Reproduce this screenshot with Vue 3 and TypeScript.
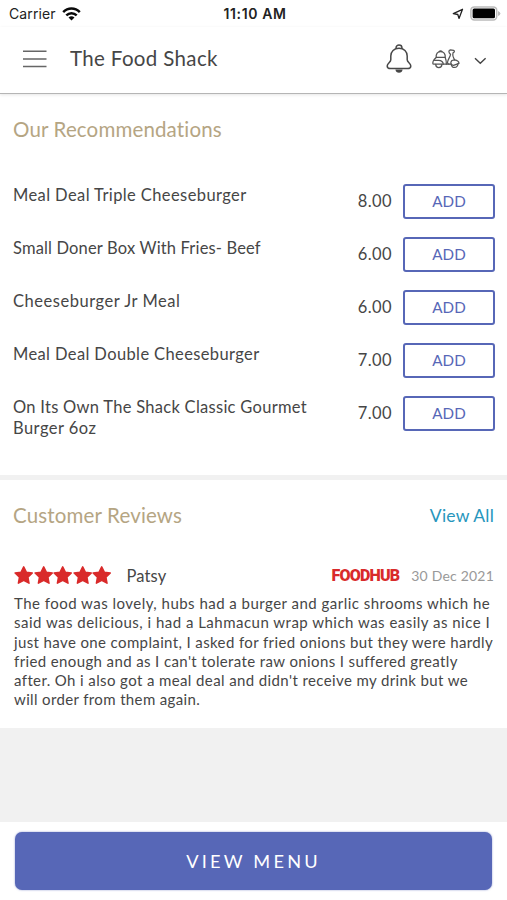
<script setup lang="ts">
interface TextLine {
  text: string
  tracking: number
}

interface MenuItem {
  name: TextLine[]
  price: string
}

const items: MenuItem[] = [
  { name: [{ text: 'Meal Deal Triple Cheeseburger', tracking: 0.4 }], price: '8.00' },
  { name: [{ text: 'Small Doner Box With Fries- Beef', tracking: 0.16 }], price: '6.00' },
  { name: [{ text: 'Cheeseburger Jr Meal', tracking: 0.53 }], price: '6.00' },
  { name: [{ text: 'Meal Deal Double Cheeseburger', tracking: 0.38 }], price: '7.00' },
  {
    name: [
      { text: 'On Its Own The Shack Classic Gourmet', tracking: 0.28 },
      { text: 'Burger 6oz', tracking: 0.46 },
    ],
    price: '7.00',
  },
]

const reviewLines: TextLine[] = [
  { text: 'The food was lovely, hubs had a burger and garlic shrooms which he', tracking: 0.476 },
  { text: 'said was delicious, i had a Lahmacun wrap which was easily as nice I', tracking: 0.485 },
  { text: 'just have one complaint, I asked for fried onions but they were hardly', tracking: 0.38 },
  { text: "fried enough and as I can't tolerate raw onions I suffered greatly", tracking: 0.38 },
  { text: "after. Oh i also got a meal deal and didn't receive my drink but we", tracking: 0.39 },
  { text: 'will order from them again.', tracking: 0.36 },
]
</script>

<template>
  <div class="screen">
    <div class="status">
      <div class="carrier">
        <span>Carrier</span>
        <svg width="19" height="14" viewBox="0 0 19 14">
          <g fill="none" stroke="#0a0a0a" stroke-width="2.5">
            <path d="M1.2 5.2C5.9.4 13.1.4 17.8 5.2" />
            <path d="M4.3 8.3c3-2.9 7.4-2.9 10.4 0" />
          </g>
          <path d="M6.5 10.5q3-2.5 6 0l-3 3.1z" fill="#0a0a0a" />
        </svg>
      </div>
      <span class="clock">11:10 AM</span>
      <div class="indicators">
        <svg width="12" height="12" viewBox="0 0 12 12">
          <path d="M10.5 1.3 7 10.4 5.8 6.5 1.3 5.6z" fill="none" stroke="#222" stroke-width="1.3" stroke-linejoin="round" />
        </svg>
        <svg width="31" height="15" viewBox="0 0 31 15">
          <rect x=".9" y=".9" width="25.8" height="13" rx="3.4" fill="#fff" stroke="#bbb" stroke-width="1.5" />
          <rect x="2.6" y="2.5" width="22.4" height="9.8" rx="1.5" fill="#000" />
          <path d="M28 5v5q2.4-1 2.4-2.5T28 5z" fill="#bbb" />
        </svg>
      </div>
    </div>

    <header class="bar">
      <svg class="burger" width="24" height="18" viewBox="0 0 24 18">
        <path d="M0 1.3h23.5M0 9h23.5M0 16.5h23.5" stroke="#666" stroke-width="1.4" />
      </svg>
      <h1>The Food Shack</h1>
      <svg class="bell" width="26" height="30" viewBox="0 0 26 30">
        <g fill="none" stroke="#484848" stroke-width="1.5" stroke-linejoin="round">
          <path d="M10.1 4.3V3.6a2.9 2.7 0 0 1 5.8 0v.7" />
          <path d="M13 4.2c-5 0-8.2 3.3-8.2 7.800v3.700c0 2.500-3.600 3.500-3.600 6.200 0 1.900 1.500 2.600 3.400 2.600h16.800c1.900 0 3.400-.7 3.400-2.600 0-2.700-3.600-3.700-3.600-6.200V12c0-4.500-3.200-7.800-8.200-7.800z" />
        </g>
        <path d="M9.4 25.6h7.2c-.3 2.3-1.6 3.2-3.6 3.2s-3.300-.9-3.600-3.200z" fill="#484848" />
      </svg>
      <svg class="scooter" width="28" height="20" viewBox="0 0 28 20">
        <g fill="none" stroke="#555" stroke-width="1.25" stroke-linecap="round" stroke-linejoin="round">
          <path d="M4.200 8.400C3.800 4.800 5.600 2.500 8.600 2.500s5 2.300 4.600 5.900z" />
          <path d="M7.200 2.500q1.400-1.500 2.800 0M4.200 8.400C2.200 10 .8 12 .8 14.200q0 1 1 1h12.600c0-3-.4-5-1.200-6.800" />
          <path d="M2.600 11.400h4q4.400.2 4.700 3.800" />
          <path d="M3.700 15.400c.2 4.300 6 4.300 6.200 0M14.400 15.200h5.100" />
          <path d="M18.500 5.300c-2.200-1.400-2-4.300-.1-4.500l3.200.5c1.300.4.9 2.200-.4 2.200l-.4 1.900c-.3 2.400 1 3.700 1.800 5.400" />
          <path d="M18.500 5.300c0 2.400-2.900 5.300-3 8.100q0 1.600 1.500 1.800M22.600 10.800c2.800.5 4.300 1.700 4.400 3.500l-5.500 2c-2.600-.1-3.700-2.600-1.600-4.800z" />
          <path d="M19.200 15.300c.2 4.300 6.400 4.200 6.800-.6" />
        </g>
      </svg>
      <svg class="chevron" width="13" height="8" viewBox="0 0 13 8">
        <path d="m1 1.2 5.3 5.1 5.3-5.1" fill="none" stroke="#444" stroke-width="1.4" />
      </svg>
    </header>

    <section class="recommendations">
      <h2>Our Recommendations</h2>
      <ul>
        <li v-for="item in items" :key="item.name[0].text">
          <div class="name">
            <span v-for="line in item.name" :key="line.text" :style="{ letterSpacing: line.tracking + 'px' }">{{ line.text }}</span>
          </div>
          <span class="price">{{ item.price }}</span>
          <button class="add" type="button">ADD</button>
        </li>
      </ul>
    </section>

    <section class="reviews">
      <div class="reviews-head">
        <h2>Customer Reviews</h2>
        <a class="all">View All</a>
      </div>
      <div class="meta">
        <div class="stars">
          <svg v-for="n in 5" :key="n" width="19.5" height="19" viewBox="0 0 19.5 19">
            <path d="m9.7.9 2.6 5.3 6 .8-4.4 4.2 1.1 6-5.3-2.9-5.3 2.9 1.1-6L1.1 7l6-.8z" fill="#d92a2a" stroke="#d92a2a" stroke-width="1.5" stroke-linejoin="round" />
          </svg>
        </div>
        <span class="author">Patsy</span>
        <span class="brand">FOODHUB</span>
        <span class="date">30 Dec 2021</span>
      </div>
      <p class="body">
        <span v-for="line in reviewLines" :key="line.text" :style="{ letterSpacing: line.tracking + 'px' }">{{ line.text }}</span>
      </p>
    </section>

    <footer>
      <button class="view-menu" type="button">VIEW MENU</button>
    </footer>
  </div>
</template>

<style>
body {
  margin: 0;
}
</style>

<style scoped>
.screen {
  width: 507px;
  height: 900px;
  display: flex;
  flex-direction: column;
  overflow: hidden;
  background: #f1f1f1;
  color: #464646;
  font-family: Lato, 'Liberation Sans', sans-serif;
}
h1, h2, p, ul {
  margin: 0;
  padding: 0;
  font-weight: 400;
}
button {
  font-family: inherit;
  margin: 0;
  padding: 0;
}
.status {
  box-sizing: border-box;
  height: 27px;
  padding: 0 6px 0 9px;
  display: grid;
  grid-template-columns: 1fr auto 1fr;
  align-items: center;
  background: #fff;
  color: #222;
  font-family: Inter, sans-serif;
  font-size: 14px;
}
.carrier {
  display: flex;
  align-items: center;
  gap: 6px;
  letter-spacing: 0.1px;
}
.clock {
  font-weight: 600;
  font-size: 14px;
  letter-spacing: 0.6px;
}
.indicators {
  display: flex;
  justify-content: flex-end;
  align-items: center;
  gap: 6px;
}
.bar {
  box-sizing: border-box;
  height: 67px;
  padding: 0 20px 2px 23px;
  display: flex;
  align-items: center;
  background: #fff;
  border-bottom: 1px solid #b5b5b5;
  box-shadow: 0 1px 3px rgba(0, 0, 0, 0.1);
  z-index: 1;
}
.bar h1 {
  margin-left: 23px;
  padding-bottom: 2px;
  flex: 1;
  font-size: 20.5px;
  letter-spacing: 0.35px;
}
.bell {
  margin-right: 20px;
}
.scooter {
  margin-right: 14px;
}
.chevron {
  margin-top: 4px;
}
.recommendations {
  box-sizing: border-box;
  height: 381px;
  padding: 21px 12px 0 13px;
  background: #fff;
}
h2 {
  font-size: 20.5px;
  line-height: 28px;
  letter-spacing: 0.15px;
  color: #b5a583;
}
.recommendations ul {
  list-style: none;
  margin-top: 41px;
}
.recommendations li {
  height: 53px;
  display: flex;
  align-items: flex-start;
}
.name {
  flex: 1;
  padding-top: 1px;
  font-size: 16.5px;
  line-height: 20.5px;
}
.name span,
.body span {
  display: block;
  white-space: nowrap;
}
.price {
  margin-right: 11px;
  font-size: 16.5px;
  line-height: 35px;
  letter-spacing: 0.4px;
}
.add {
  box-sizing: border-box;
  width: 92px;
  height: 35px;
  padding-bottom: 2px;
  border: 2px solid #5767b7;
  border-radius: 3px;
  background: #fff;
  color: #5767b7;
  font-size: 15.2px;
}
.reviews {
  box-sizing: border-box;
  height: 248px;
  margin-top: 5px;
  padding: 21px 13px 0;
  background: #fff;
}
.reviews-head {
  display: flex;
  justify-content: space-between;
  align-items: center;
}
.all {
  font-size: 17.5px;
  letter-spacing: 0.2px;
  color: #2796bd;
}
.meta {
  display: flex;
  align-items: center;
  height: 20px;
  margin-top: 36px;
}
.stars {
  display: flex;
  margin-left: 1px;
  padding-top: 1px;
}
.author {
  margin-left: 15px;
  padding-top: 2px;
  font-size: 16.5px;
  letter-spacing: 0.15px;
  flex: 1;
}
.brand {
  margin-right: 12px;
  font-family: Roboto, sans-serif;
  font-weight: 900;
  font-size: 16px;
  letter-spacing: -0.8px;
  color: #d92a2a;
}
.date {
  font-size: 14px;
  letter-spacing: 0.2px;
  color: #999;
}
.body {
  margin: 9px 0 0 1px;
  font-size: 15px;
  line-height: 19.3px;
}
footer {
  box-sizing: border-box;
  height: 78px;
  margin-top: auto;
  padding: 10px 15px;
  background: #fff;
}
.view-menu {
  display: block;
  width: 477px;
  height: 58px;
  padding-bottom: 1px;
  border: 0;
  border-radius: 7px;
  background: #5767b7;
  box-shadow: 0 0 2px rgba(87, 103, 183, 0.7);
  color: #fff;
  font-size: 18.2px;
  letter-spacing: 3.2px;
}
</style>
